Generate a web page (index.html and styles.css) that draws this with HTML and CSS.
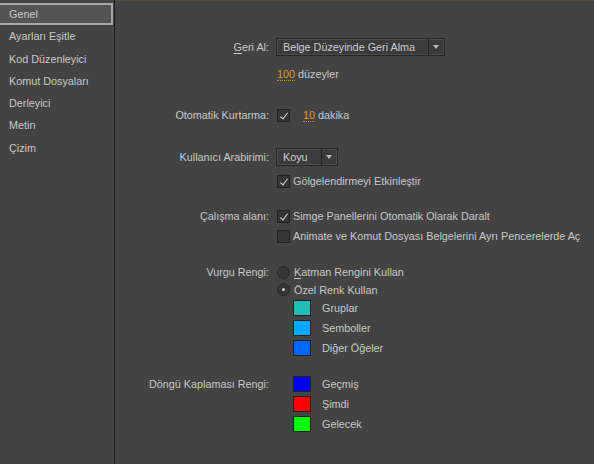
FILE: index.html
```html
<!DOCTYPE html>
<html lang="tr">
<head>
  <meta charset="UTF-8" />
  <title>Tercihler</title>
  <link rel="stylesheet" href="styles.css">
</head>
<body>
  <div class="window">

    <!-- Category list -->
    <nav class="sidebar">
      <div class="nav-item active">Genel</div>
      <div class="nav-item">Ayarları Eşitle</div>
      <div class="nav-item">Kod Düzenleyici</div>
      <div class="nav-item">Komut Dosyaları</div>
      <div class="nav-item">Derleyici</div>
      <div class="nav-item">Metin</div>
      <div class="nav-item">Çizim</div>
    </nav>

    <!-- General settings -->
    <main class="content">

      <div class="group g-undo">
        <div class="label"><u>G</u>eri Al:</div>
        <div class="controls">
          <div class="select wide">
            <span class="select-text">Belge Düzeyinde Geri Alma</span>
            <span class="select-arrow"></span>
          </div>
          <div class="line levels"><span class="num">100</span>&nbsp;düzeyler</div>
        </div>
      </div>

      <div class="group g-save">
        <div class="label">Otomatik Kurtarma:</div>
        <div class="controls">
          <div class="line">
            <span class="check on"></span>
            <span class="num gap">10</span>&nbsp;dakika
          </div>
        </div>
      </div>

      <div class="group g-ui">
        <div class="label">Kullanıcı Arabirimi:</div>
        <div class="controls">
          <div class="select narrow">
            <span class="select-text">Koyu</span>
            <span class="select-arrow"></span>
          </div>
          <div class="line shading"><span class="check on"></span>Gölgelendirmeyi Etkinleştir</div>
        </div>
      </div>

      <div class="group g-work">
        <div class="label row20">Çalışma alanı:</div>
        <div class="controls">
          <div class="line row20"><span class="check on"></span>Simge Panellerini Otomatik Olarak Daralt</div>
          <div class="line row20"><span class="check"></span>Animate ve Komut Dosyası Belgelerini Ayrı Pencerelerde Aç</div>
        </div>
      </div>

      <div class="group g-accent">
        <div class="label">Vurgu Rengi:</div>
        <div class="controls">
          <div class="line"><span class="radio"></span><u>K</u>atman Rengini Kullan</div>
          <div class="line custom"><span class="radio on"></span>Özel Renk Kullan</div>
          <div class="swatch-row indent"><span class="swatch teal"></span>Gruplar</div>
          <div class="swatch-row indent"><span class="swatch sky"></span>Semboller</div>
          <div class="swatch-row indent"><span class="swatch blue"></span>Diğer Öğeler</div>
        </div>
      </div>

      <div class="group g-loop">
        <div class="label row20">Döngü Kaplaması Rengi:</div>
        <div class="controls">
          <div class="swatch-row indent"><span class="swatch past"></span>Geçmiş</div>
          <div class="swatch-row indent"><span class="swatch now"></span>Şimdi</div>
          <div class="swatch-row indent"><span class="swatch future"></span>Gelecek</div>
        </div>
      </div>

    </main>
  </div>
</body>
</html>
```

FILE: styles.css
```css
* {
  box-sizing: border-box;
}
html, body {
  margin: 0;
  padding: 0;
  width: 100%;
  height: 100%;
  background-color: #434343;
  color: #c8c8c8;
  font-family: 'Liberation Sans', Arial, sans-serif;
  font-size: 10.8px;
}
u {
  text-decoration: underline;
  text-underline-offset: 2px;
}
.window {
  display: flex;
  width: 594px;
  height: 464px;
}

/* sidebar */
.sidebar {
  width: 115px;
  flex-shrink: 0;
  padding-top: 3px;
  border-right: 1px solid #1d1d1d;
}
.nav-item {
  height: 22.3px;
  line-height: 22px;
  padding-left: 9px;
  white-space: nowrap;
}
.nav-item.active {
  background-color: #545454;
  border: 2px solid #a9a9a9;
  border-left: none;
  line-height: 18px;
  margin-right: 1px;
}

/* content */
.content {
  flex: 1;
  border-top: 1px solid #574d3d;
  padding-top: 37px;
}
.group {
  display: grid;
  grid-template-columns: 154px 1fr;
  column-gap: 7px;
}
.label {
  text-align: right;
  height: 18px;
  line-height: 18px;
  white-space: nowrap;
}
.label.row20 {
  height: 20px;
  line-height: 20px;
}
.controls {
  display: flex;
  flex-direction: column;
}
.line {
  display: flex;
  align-items: center;
  height: 18px;
  white-space: nowrap;
}
.line.row20 {
  height: 20px;
}
.line.custom {
  height: 17px;
}

.g-save { margin-top: 23px; }
.g-ui { margin-top: 24px; }
.g-work { margin-top: 16px; }
.g-accent { margin-top: 17px; }
.g-loop { margin-top: 16px; }

.levels {
  margin-top: 9px;
  padding-left: 1px;
}
.shading {
  margin-top: 6px;
}

/* dropdowns */
.select {
  display: flex;
  align-items: stretch;
  height: 18px;
  background-color: #3b3b3b;
  border: 1px solid #262626;
  box-shadow: inset 0 0 0 1px #4d4d4d;
}
.select.wide { width: 169px; }
.select.narrow { width: 62px; }
.select-text {
  flex: 1;
  line-height: 16px;
  padding-left: 6px;
  color: #cdcdcd;
  white-space: nowrap;
  border-right: 1px solid #262626;
}
.select-arrow {
  width: 15px;
  position: relative;
}
.select-arrow::after {
  content: "";
  position: absolute;
  left: 4px;
  top: 6px;
  border-left: 3.5px solid transparent;
  border-right: 3.5px solid transparent;
  border-top: 4px solid #b8b8b8;
}

/* numbers */
.num {
  color: #d6a11c;
  border-bottom: 1px dotted #c08a18;
  line-height: 12px;
}
.num.gap {
  margin-left: 10px;
}

/* checkboxes and radios */
.check {
  width: 13px;
  height: 13px;
  margin: 0 3px 0 1px;
  background-color: #353535;
  border: 1px solid #222;
  position: relative;
  flex-shrink: 0;
}
.check.on::after {
  content: "";
  position: absolute;
  left: 4px;
  top: 1px;
  width: 3px;
  height: 7px;
  border-right: 1.5px solid #d4d4d4;
  border-bottom: 1.5px solid #d4d4d4;
  transform: rotate(38deg);
}
.radio {
  width: 13px;
  height: 13px;
  margin: 0 4px 0 1px;
  border-radius: 50%;
  background-color: #363636;
  border: 1px solid #262626;
  position: relative;
  flex-shrink: 0;
}
.radio.on::after {
  content: "";
  position: absolute;
  left: 4px;
  top: 4px;
  width: 3px;
  height: 3px;
  border-radius: 50%;
  background-color: #d0d0d0;
}

/* colour swatches */
.swatch-row {
  display: flex;
  align-items: center;
  height: 20px;
  white-space: nowrap;
}
.swatch-row.indent {
  padding-left: 17px;
}
.swatch {
  width: 18px;
  height: 16px;
  margin-right: 11px;
  border: 1px solid #222;
}
.teal { background-color: #1fbdb5; }
.sky { background-color: #00aaff; }
.blue { background-color: #0066ff; }
.past { background-color: #0000ff; }
.now { background-color: #ff0000; }
.future { background-color: #00ff00; }
```
